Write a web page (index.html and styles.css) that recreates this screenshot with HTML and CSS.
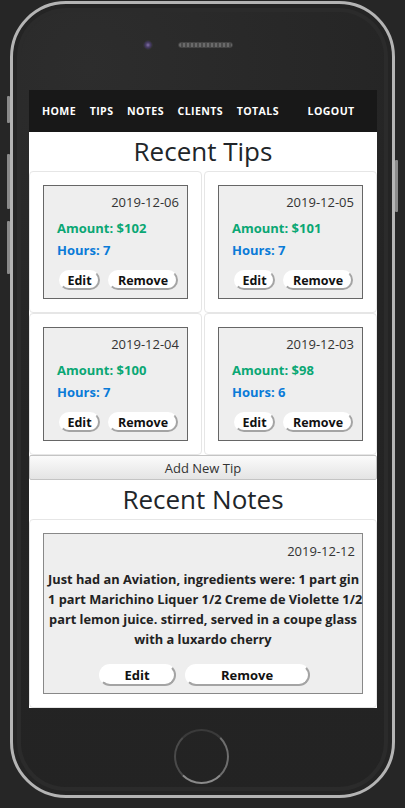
FILE: index.html
```html
<!DOCTYPE html>
<html lang="en">
  <head>
    <meta charset="UTF-8" />
    <meta name="viewport" content="width=device-width, initial-scale=1.0" />
    <title>Tip Tracker</title>
    <link rel="stylesheet" href="styles.css">
  </head>
  <body>
    <div class="phone">
      <span class="side-btn mute"></span>
      <span class="side-btn vol-up"></span>
      <span class="side-btn vol-down"></span>
      <span class="side-btn power"></span>

      <div class="bezel-top">
        <span class="camera"></span>
        <span class="speaker"></span>
      </div>

      <div class="screen">
        <nav class="navbar">
          <a href="#">Home</a>
          <a href="#">Tips</a>
          <a href="#">Notes</a>
          <a href="#">Clients</a>
          <a href="#">Totals</a>
          <a href="#" class="logout">Logout</a>
        </nav>

        <h2 class="section-title">Recent Tips</h2>

        <div class="tip-grid">
          <div class="tip-cell">
            <div class="tip-card">
              <p class="date">2019-12-06</p>
              <p class="amount">Amount: $102</p>
              <p class="hours">Hours: 7</p>
              <div class="actions">
                <button class="pill edit">Edit</button>
                <button class="pill remove">Remove</button>
              </div>
            </div>
          </div>
          <div class="tip-cell">
            <div class="tip-card">
              <p class="date">2019-12-05</p>
              <p class="amount">Amount: $101</p>
              <p class="hours">Hours: 7</p>
              <div class="actions">
                <button class="pill edit">Edit</button>
                <button class="pill remove">Remove</button>
              </div>
            </div>
          </div>
          <div class="tip-cell">
            <div class="tip-card">
              <p class="date">2019-12-04</p>
              <p class="amount">Amount: $100</p>
              <p class="hours">Hours: 7</p>
              <div class="actions">
                <button class="pill edit">Edit</button>
                <button class="pill remove">Remove</button>
              </div>
            </div>
          </div>
          <div class="tip-cell">
            <div class="tip-card">
              <p class="date">2019-12-03</p>
              <p class="amount">Amount: $98</p>
              <p class="hours">Hours: 6</p>
              <div class="actions">
                <button class="pill edit">Edit</button>
                <button class="pill remove">Remove</button>
              </div>
            </div>
          </div>
        </div>

        <button class="add-btn">Add New Tip</button>

        <h2 class="section-title">Recent Notes</h2>

        <div class="note-cell">
          <div class="note-card">
            <p class="date">2019-12-12</p>
            <p class="note-text">
              Just had an Aviation, ingredients were: 1 part gin<br />
              1 part Marichino Liquer 1/2 Creme de Violette 1/2<br />
              part lemon juice. stirred, served in a coupe glass<br />
              with a luxardo cherry
            </p>
            <div class="note-actions">
              <button class="pill edit-wide">Edit</button>
              <button class="pill remove-wide">Remove</button>
            </div>
          </div>
        </div>
      </div>

      <div class="bezel-bottom">
        <span class="home-btn"></span>
      </div>
    </div>
  </body>
</html>
```

FILE: styles.css
```css
* {
  margin: 0;
  padding: 0;
  box-sizing: border-box;
  font-family: "Open Sans", "Noto Sans", sans-serif;
}

body {
  background-color: #262626;
  padding: 1px 0 0 10px;
}

.phone {
  position: relative;
  width: 385px;
  height: 797px;
  border: 3px solid #b4b4b4;
  border-radius: 56px;
  background: radial-gradient(circle at 20% 8%, #2d2d2d 0%, #242424 45%, #232323 100%);
  box-shadow: inset 0 0 0 4px #242424, inset 0 0 0 8px #2b2b2b;
  padding: 0 15px 0 16px;
}

/* side buttons */
.side-btn {
  position: absolute;
  width: 3px;
  background: #8a8a8a;
  border-radius: 1px;
}

.mute {
  left: -6px;
  top: 92px;
  height: 27px;
}

.vol-up {
  left: -6px;
  top: 150px;
  height: 55px;
}

.vol-down {
  left: -6px;
  top: 217px;
  height: 53px;
}

.power {
  right: -6px;
  top: 156px;
  height: 52px;
}

.bezel-top {
  height: 86px;
  display: flex;
  justify-content: center;
  align-items: flex-start;
  gap: 25px;
  padding: 36px 31px 0 0;
}

.camera {
  width: 10px;
  height: 10px;
  border-radius: 50%;
  background: radial-gradient(circle, #8370a8 0%, #4a3f66 40%, #22202a 100%);
  border: 1px solid #333;
}

.speaker {
  width: 55px;
  height: 6px;
  margin-top: 2px;
  border-radius: 3px;
  background: repeating-linear-gradient(90deg, #6a6a6a 0 2px, #4a4a4a 2px 4px);
  border: 1px solid #444;
}

.screen {
  height: 618px;
  background-color: white;
  overflow: hidden;
  color: #212529;
}

.navbar {
  height: 42px;
  background-color: #181818;
  display: flex;
  align-items: center;
  gap: 13.6px;
  padding-left: 13px;
}

.navbar a {
  color: white;
  text-decoration: none;
  text-transform: uppercase;
  font-size: 10.6px;
  font-weight: 700;
  letter-spacing: 0.4px;
}

.navbar .logout {
  margin-left: 15px;
}

.section-title {
  font-size: 26px;
  font-weight: 400;
  line-height: 39px;
  text-align: center;
  color: #212529;
}

.tip-grid {
  display: grid;
  grid-template-columns: minmax(0, 1fr) minmax(0, 1fr);
  column-gap: 2px;
}

.tip-cell,
.note-cell {
  border: 1px solid #e6e6e6;
  border-radius: 4px;
  padding: 13px;
}

.tip-card,
.note-card {
  background-color: #eeeeee;
  border: 1px solid #666;
}

.tip-card {
  height: 114px;
  padding: 7px 8px 0 13px;
}

.date {
  text-align: right;
  font-size: 13px;
  line-height: 18px;
  color: #333;
}

.amount,
.hours {
  font-size: 13px;
  font-weight: 700;
  line-height: 22px;
}

.amount {
  margin-top: 6px;
  color: #0aa774;
}

.hours {
  color: #0a7bd8;
}

.actions {
  display: flex;
  gap: 8px;
  margin-top: 9px;
  padding-left: 2px;
}

.pill {
  height: 20px;
  padding: 0;
  background: white;
  border: 2px solid;
  border-color: #fff #a4a4a4 #a4a4a4 #fff;
  border-radius: 11px;
  font-size: 12.5px;
  font-weight: 700;
  color: #111;
  cursor: pointer;
}

.edit {
  width: 41px;
}

.remove {
  width: 70px;
}

.add-btn {
  display: block;
  width: 100%;
  height: 25px;
  background: linear-gradient(#fbfbfb, #e4e4e4);
  border: 1px solid #c4c4c4;
  border-radius: 2px;
  font-size: 13px;
  color: #333;
}

.note-card {
  border-color: #888;
  padding: 8px 7px 7px 7px;
}

.note-text {
  margin: 9px -3px 0;
  font-size: 12.8px;
  font-weight: 700;
  line-height: 20px;
  text-align: center;
  color: #222;
  white-space: nowrap;
}

.note-actions {
  display: flex;
  justify-content: center;
  gap: 9px;
  margin-top: 15px;
  padding-left: 2px;
}

.note-actions .pill {
  height: 22px;
  font-size: 13px;
}

.edit-wide {
  width: 77px;
}

.remove-wide {
  width: 125px;
}

.bezel-bottom {
  height: 87px;
  display: flex;
  justify-content: center;
  align-items: center;
  padding: 10px 3px 0 0;
}

.home-btn {
  width: 55px;
  height: 55px;
  border-radius: 50%;
  border: 2px solid;
  border-color: #3a3a3a #6e6e6e #8a8a8a #4a4a4a;
}
```
